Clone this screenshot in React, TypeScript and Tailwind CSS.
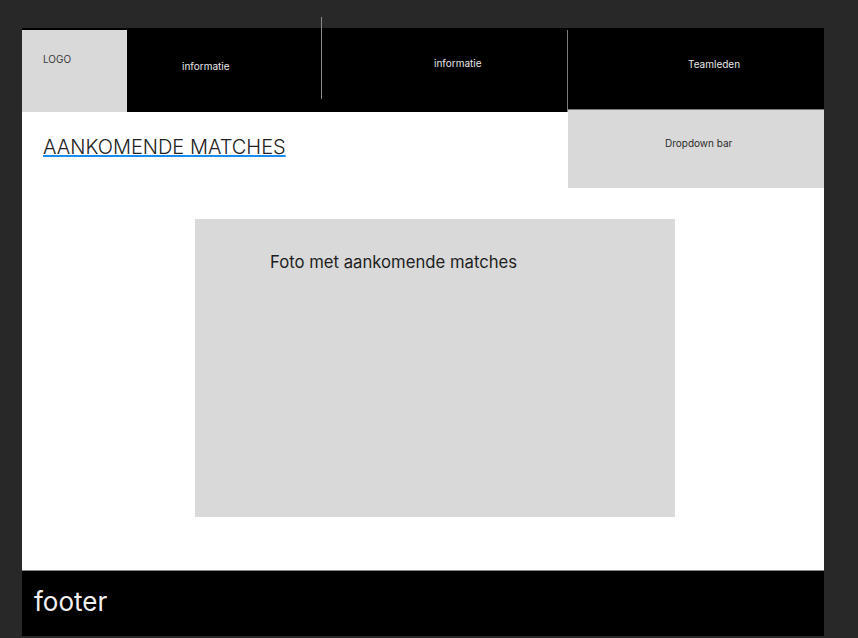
import React from "react";

export default function App() {
  const font = { fontFamily: "Inter, 'Noto Sans', sans-serif" };
  return (
    <div className="w-[858px] h-[638px] bg-[#282828] relative overflow-hidden" style={font}>
      <div className="absolute left-[321px] top-[17px] w-px h-[82px] bg-[#8a8a8a] z-10" />
      <div className="pt-[28px] pl-[22px]">
        <div className="w-[802px] bg-white flex flex-col">
          <div className="flex">
            <div className="flex-1 flex flex-col">
              <div className="h-[84px] bg-black flex pt-[2px]">
                <div className="w-[105px] h-[82px] bg-[#d9d9d9] pl-[21px] pt-[23px]">
                  <span className="block text-[10px] leading-[12px] text-[#3a3a3a]">LOGO</span>
                </div>
                <div className="w-[194px] pl-[55px] pt-[30px]">
                  <span className="block text-[10px] leading-[12px] text-[#e8e8e8]">informatie</span>
                </div>
                <div className="flex-1 pl-[113px] pt-[27px] border-r border-[#7a7a7a]">
                  <span className="block text-[10px] leading-[12px] text-[#e8e8e8]">informatie</span>
                </div>
              </div>
              <div className="pl-[21px] pt-[21px]">
                <h1 className="text-[20px] leading-[28px] font-light text-[#222] underline decoration-[#1a8cf0] decoration-2 underline-offset-[1px]">
                  AANKOMENDE MATCHES
                </h1>
              </div>
            </div>
            <div className="w-[256px] flex flex-col">
              <div className="h-[82px] bg-black pl-[120px] pt-[30px] border-b border-[#777]">
                <span className="block text-[10px] leading-[12px] text-[#e8e8e8]">Teamleden</span>
              </div>
              <div className="h-[78px] bg-[#d9d9d9] pl-[97px] pt-[27px]">
                <span className="block text-[10px] leading-[12px] text-[#2a2a2a]">Dropdown bar</span>
              </div>
            </div>
          </div>
          <div className="pt-[31px] pl-[173px] pb-[53px]">
            <div className="w-[480px] h-[298px] bg-[#d9d9d9] pl-[75px] pt-[33px]">
              <span className="block text-[16.7px] leading-[20px] text-[#1e1e1e]">Foto met aankomende matches</span>
            </div>
          </div>
          <div className="h-[66px] bg-black border-t border-[#8a8a8a] pl-[12px] pt-[15px]">
            <span className="block text-[26px] leading-[32px] text-[#f0f0f0]">footer</span>
          </div>
        </div>
      </div>
    </div>
  );
}
